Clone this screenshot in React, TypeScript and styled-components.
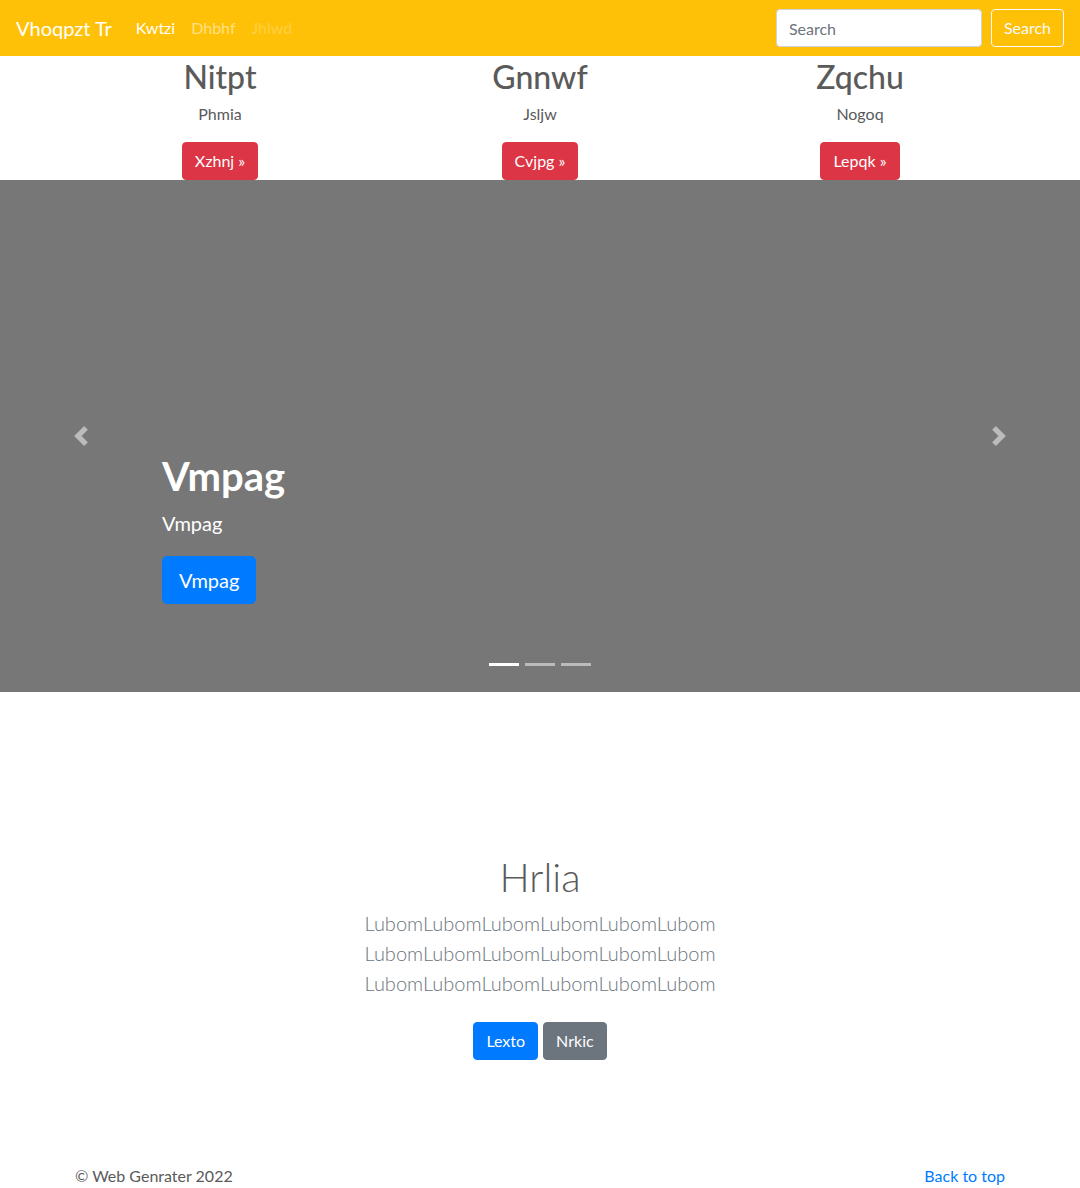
import React from 'react';
import styled, { createGlobalStyle } from 'styled-components';

const FONT = `Lato, "Open Sans", "Liberation Sans", sans-serif`;

const GlobalStyle = createGlobalStyle`
  * { box-sizing: border-box; }
  body {
    margin: 0;
    font-family: ${FONT};
    font-size: 16px;
    line-height: 1.5;
    color: #5a5a5a;
    background: #fff;
  }
`;

const Navbar = styled.nav`
  display: flex;
  align-items: center;
  height: 56px;
  padding: 8px 16px;
  background: #ffc107;
`;

const Brand = styled.a`
  font-size: 20px;
  line-height: 30px;
  color: #fff;
  margin-right: 16px;
  text-decoration: none;
`;

const NavList = styled.ul`
  display: flex;
  list-style: none;
  margin: 0;
  padding: 0;
`;

const NavLink = styled.a<{ $state: 'active' | 'normal' | 'disabled' }>`
  display: block;
  padding: 8px;
  text-decoration: none;
  color: ${p =>
    p.$state === 'active'
      ? '#fff'
      : p.$state === 'normal'
      ? 'rgba(255,255,255,.5)'
      : 'rgba(255,255,255,.25)'};
`;

const SearchForm = styled.form`
  display: flex;
  align-items: center;
  margin-left: auto;
  gap: 9px;
`;

const SearchInput = styled.input`
  width: 206px;
  height: 38px;
  padding: 6px 12px;
  font-family: ${FONT};
  font-size: 16px;
  color: #495057;
  border: 1px solid #ced4da;
  border-radius: 4px;
  background: #fff;
  &::placeholder { color: #6c757d; }
`;

const Button = styled.a<{ $variant: 'danger' | 'primary' | 'secondary' | 'light'; $lg?: boolean }>`
  display: inline-block;
  font-family: ${FONT};
  font-size: ${p => (p.$lg ? '20px' : '16px')};
  line-height: 1.5;
  padding: ${p => (p.$lg ? '8px 16px' : '6px 12px')};
  border-radius: ${p => (p.$lg ? '5px' : '4px')};
  border: 1px solid
    ${p =>
      p.$variant === 'danger'
        ? '#dc3545'
        : p.$variant === 'primary'
        ? '#007bff'
        : p.$variant === 'secondary'
        ? '#6c757d'
        : '#f8f9fa'};
  background: ${p =>
    p.$variant === 'danger'
      ? '#dc3545'
      : p.$variant === 'primary'
      ? '#007bff'
      : p.$variant === 'secondary'
      ? '#6c757d'
      : 'transparent'};
  color: ${p => (p.$variant === 'light' ? '#f8f9fa' : '#fff')};
  text-decoration: none;
  cursor: pointer;
`;

const FeatureRow = styled.div`
  display: grid;
  grid-template-columns: repeat(3, 1fr);
  max-width: 960px;
  margin: 0 auto;
  text-align: center;
`;

const Feature = styled.div`
  padding: 0 15px;
`;

const FeatureTitle = styled.h2`
  margin: 2px 0 6px;
  font-size: 32px;
  line-height: 1.2;
  font-weight: 500;
`;

const FeatureText = styled.p`
  margin: 0 0 16px;
`;

const Carousel = styled.div`
  position: relative;
  height: 512px;
  background: #777;
  overflow: hidden;
`;

const Caption = styled.div`
  position: absolute;
  left: 15%;
  right: 15%;
  bottom: 48px;
  padding: 20px 0 40px;
  color: #fff;
  text-align: left;
`;

const CaptionTitle = styled.h1`
  margin: 0 0 8px;
  font-size: 40px;
  line-height: 1.2;
  font-weight: 700;
`;

const CaptionText = styled.p`
  margin: 0 0 18px;
  font-size: 20px;
  line-height: 1.5;
`;

const Control = styled.a<{ $side: 'left' | 'right' }>`
  position: absolute;
  top: 0;
  bottom: 0;
  ${p => p.$side}: 0;
  width: 15%;
  display: flex;
  align-items: center;
  justify-content: center;
  opacity: 0.5;
`;

const Indicators = styled.ol`
  position: absolute;
  left: 0;
  right: 0;
  bottom: 26px;
  display: flex;
  justify-content: center;
  margin: 0;
  padding: 0;
  list-style: none;
`;

const Indicator = styled.li<{ $active?: boolean }>`
  width: 30px;
  height: 3px;
  margin: 0 3px;
  background: #fff;
  opacity: ${p => (p.$active ? 1 : 0.5)};
`;

const Jumbotron = styled.section`
  padding: 161px 0 104px;
  text-align: center;
`;

const JumboTitle = styled.h1`
  margin: 0 0 7px;
  font-size: 40px;
  line-height: 1.2;
  font-weight: 300;
`;

const Lead = styled.p`
  margin: 0 0 16px;
  font-size: 20px;
  line-height: 30px;
  font-weight: 300;
  color: #6c757d;
`;

const ButtonRow = styled.div`
  display: flex;
  justify-content: center;
  gap: 5px;
  margin-top: 24px;
`;

const Footer = styled.footer`
  display: flex;
  justify-content: space-between;
  max-width: 960px;
  margin: 0 auto;
  padding: 0 15px 24px;
`;

const FooterText = styled.p`
  margin: 0;
`;

const FooterLink = styled.a`
  color: #007bff;
  text-decoration: none;
`;

const Chevron = ({ dir }: { dir: 'prev' | 'next' }) => (
  <svg width="20" height="20" viewBox="0 0 8 8" fill="#fff">
    <path
      d={
        dir === 'prev'
          ? 'M5.25 0l-4 4 4 4 1.5-1.5L4.25 4l2.5-2.5L5.25 0z'
          : 'M2.75 0l-1.5 1.5L3.75 4l-2.5 2.5L2.75 8l4-4-4-4z'
      }
    />
  </svg>
);

const features = [
  { title: 'Nitpt', text: 'Phmia', button: 'Xzhnj' },
  { title: 'Gnnwf', text: 'Jsljw', button: 'Cvjpg' },
  { title: 'Zqchu', text: 'Nogoq', button: 'Lepqk' },
];

const lubom = 'Lubom'.repeat(6);

export default function App() {
  return (
    <>
      <GlobalStyle />
      <Navbar>
        <Brand href="#">Vhoqpzt Tr</Brand>
        <NavList>
          <li><NavLink $state="active" href="#">Kwtzi</NavLink></li>
          <li><NavLink $state="normal" href="#">Dhbhf</NavLink></li>
          <li><NavLink $state="disabled" href="#">Jhlwd</NavLink></li>
        </NavList>
        <SearchForm onSubmit={e => e.preventDefault()}>
          <SearchInput type="text" placeholder="Search" />
          <Button $variant="light">Search</Button>
        </SearchForm>
      </Navbar>

      <FeatureRow>
        {features.map(f => (
          <Feature key={f.title}>
            <FeatureTitle>{f.title}</FeatureTitle>
            <FeatureText>{f.text}</FeatureText>
            <Button $variant="danger" href="#">{f.button} &raquo;</Button>
          </Feature>
        ))}
      </FeatureRow>

      <Carousel>
        <Control $side="left" href="#"><Chevron dir="prev" /></Control>
        <Caption>
          <CaptionTitle>Vmpag</CaptionTitle>
          <CaptionText>Vmpag</CaptionText>
          <Button $variant="primary" $lg href="#">Vmpag</Button>
        </Caption>
        <Control $side="right" href="#"><Chevron dir="next" /></Control>
        <Indicators>
          <Indicator $active />
          <Indicator />
          <Indicator />
        </Indicators>
      </Carousel>

      <Jumbotron>
        <JumboTitle>Hrlia</JumboTitle>
        <Lead>
          {lubom}<br />{lubom}<br />{lubom}
        </Lead>
        <ButtonRow>
          <Button $variant="primary" href="#">Lexto</Button>
          <Button $variant="secondary" href="#">Nrkic</Button>
        </ButtonRow>
      </Jumbotron>

      <Footer>
        <FooterText>&copy; Web Genrater 2022</FooterText>
        <FooterLink href="#">Back to top</FooterLink>
      </Footer>
    </>
  );
}
